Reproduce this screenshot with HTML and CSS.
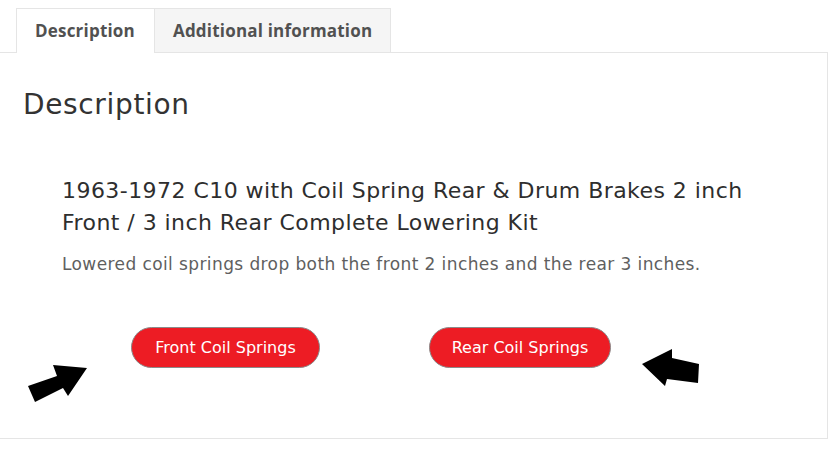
FILE: index.html
```html
<!DOCTYPE html>
<html lang="en">
<head>
<meta charset="utf-8">
<title>Description</title>
<link rel="stylesheet" href="styles.css">
</head>
<body>
<div class="page">
  <ul class="tabs">
    <li class="tab active">Description</li>
    <li class="tab">Additional information</li>
  </ul>
  <div class="panel">
    <h2 class="panel-title">Description</h2>
    <div class="product">
      <h3 class="product-title">1963-1972 C10 with Coil Spring Rear &amp; Drum Brakes 2 inch Front / 3 inch Rear Complete Lowering Kit</h3>
      <p class="product-text">Lowered coil springs drop both the front 2 inches and the rear 3 inches.</p>
      <div class="buttons">
        <a class="btn btn-front">Front Coil Springs</a>
        <a class="btn btn-rear">Rear Coil Springs</a>
      </div>
    </div>
  </div>
  <svg class="arrows" width="835" height="456" viewBox="0 0 835 456" aria-hidden="true">
    <polygon points="87,368 53,365 57,376 28,386 35,402 63,388 68,396" fill="#000"/>
    <polygon points="642,364 672,349 672,358 699,364 698,383 667,379 665,386" fill="#000"/>
  </svg>
</div>
</body>
</html>
```
FILE: styles.css
```css
html, body {
  margin: 0;
  padding: 0;
  background: #fff;
}
body {
  font-family: "DejaVu Sans", "Liberation Sans", sans-serif;
  color: #333;
}
.page {
  position: relative;
  width: 835px;
  height: 456px;
  overflow: hidden;
}
.tabs {
  list-style: none;
  margin: 0 0 -1px 0;
  padding: 8px 0 0 16px;
  display: flex;
  position: relative;
  z-index: 1;
}
.tab {
  height: 44px;
  box-sizing: border-box;
  border: 1px solid #e5e5e5;
  border-bottom: none;
  background: #f5f5f5;
  color: #515151;
  font-family: "Open Sans", "DejaVu Sans", sans-serif;
  font-weight: 700;
  font-size: 17px;
  letter-spacing: 0.2px;
  line-height: 43px;
  padding: 0 18px;
}
.tab.active {
  padding: 0 19px 0 18px;
}
.tab + .tab {
  border-left: none;
}
.tab.active {
  background: #fff;
  height: 45px;
}
.panel {
  width: 828px;
  box-sizing: border-box;
  border-top: 1px solid #e5e5e5;
  border-right: 1px solid #e5e5e5;
  border-bottom: 1px solid #e5e5e5;
  padding: 35px 0 70px 23px;
}
.panel-title {
  margin: 0;
  font-size: 28px;
  letter-spacing: 0.65px;
  line-height: 34px;
  font-weight: 400;
  color: #333;
}
.product {
  padding-left: 39px;
}
.product-title {
  margin: 53px 0 0 0;
  max-width: 700px;
  font-size: 22px;
  letter-spacing: 0.45px;
  line-height: 32px;
  font-weight: 400;
  color: #2e2e2e;
}
.product-text {
  margin: 13px 0 0 0;
  font-size: 17px;
  letter-spacing: 0.4px;
  line-height: 24px;
  color: #5f5f5f;
}
.buttons {
  display: flex;
  gap: 109px;
  margin-top: 51px;
  padding-left: 69px;
}
.btn {
  display: flex;
  align-items: center;
  justify-content: center;
  height: 41px;
  box-sizing: border-box;
  border: 1px solid #8a8a8a;
  border-radius: 21px;
  background: #ed1c24;
  color: #fff;
  font-size: 16px;
}
.btn-front {
  width: 189px;
}
.btn-rear {
  width: 182px;
}
.arrows {
  position: absolute;
  left: 0;
  top: 0;
  pointer-events: none;
}
```
